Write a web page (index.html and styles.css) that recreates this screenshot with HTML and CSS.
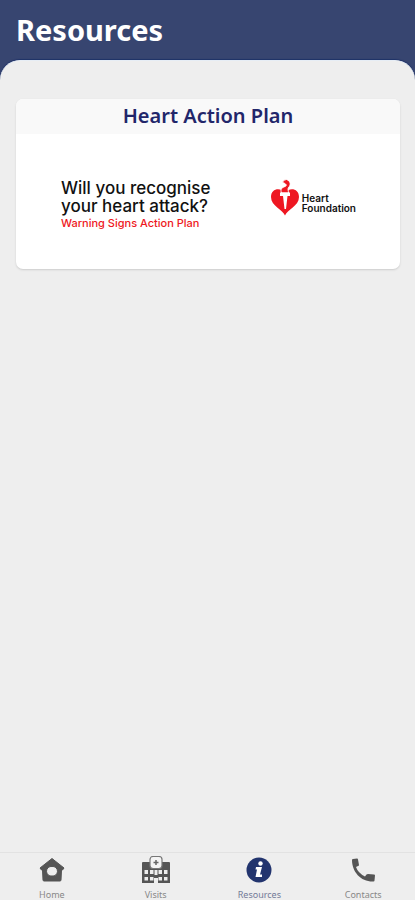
FILE: index.html
```html
<!DOCTYPE html>
<html lang="en">
<head>
<meta charset="utf-8">
<meta name="viewport" content="width=device-width, initial-scale=1">
<title>Resources</title>
<link rel="stylesheet" href="styles.css">
</head>
<body>
<header class="header"><h1 class="header-title">Resources</h1></header>
<main class="content">
  <a class="card" href="#plan">
    <h2 class="card-title">Heart Action Plan</h2>
    <div class="banner">
      <div class="message">
        <p class="question">Will you recognise<br>your heart attack?</p>
        <p class="subtitle">Warning Signs Action Plan</p>
      </div>
      <div class="brand">
        <svg class="brand-mark" viewBox="0 0 28 37" aria-hidden="true">
          <path fill="#ee1722" d="M14 36.500C12 31 0 27 0 18C0 9 10 8 14 14C18 8 28 9 28 18C28 27 16 31 14 36.500Z"/>
          <path fill="#ee1722" stroke="#fff" stroke-width="1" d="M10.500 14C9 10 11 8.500 14 7.500C16.500 6.500 15 4.500 11.500 3.500Q12 0.500 15.500 0.500C20 2 20 6 17.500 8.500C16.500 10 17.500 12 17.500 14Z"/>
          <path fill="#fff" d="M9 13.500H19V17H16.500L15 30H13.500L12 17H9Z"/>
        </svg>
        <p class="brand-name">Heart<br>Foundation</p>
      </div>
    </div>
  </a>
</main>
<nav class="tabs" aria-label="Main">
  <a class="tab" href="#home">
    <svg class="tab-icon" viewBox="0 0 30 28" aria-hidden="true">
      <path fill="#555" stroke="#555" stroke-width="1" stroke-linejoin="round" fill-rule="evenodd" d="M15 2.500L27 12L25.500 14H24.500L24 24Q24 25 23 25H7Q6 25 6 24L5.500 14H4.500L3 12ZM15 10.500A4.800 4.800 0 1 0 15 20A4.800 4.800 0 1 0 15 10.500Z"/>
    </svg>
    <span>Home</span>
  </a>
  <a class="tab" href="#visits">
    <svg class="tab-icon" viewBox="0 0 30 28" aria-hidden="true">
      <path fill="#555" fill-rule="evenodd" d="M1 7Q1 6 2 6H10V10H20V6H28Q29 6 29 7V27H17V22H13V27H1ZM3.500 14V18H7V14ZM9 14V18H12.500V14ZM17.500 14V18H21V14ZM23 14V18H26.500V14ZM3.500 21V24.500H7V21ZM9 21V24.500H12.500V21ZM17.500 21V24.500H21V21ZM23 21V24.500H26.500V21ZM13.500 14V19H16.500V14Z"/>
      <rect x="9" y="0.500" width="12" height="12" rx="3" fill="#f4f4f4" stroke="#777" stroke-width="1.200"/>
      <path stroke="#666" stroke-width="1.500" d="M15 4V9M12.500 6.500H17.500"/>
    </svg>
    <span>Visits</span>
  </a>
  <a class="tab tab-active" href="#resources" aria-current="page">
    <svg class="tab-icon" viewBox="0 0 30 28" aria-hidden="true">
      <circle cx="15" cy="14" r="12.500" fill="#22346e"/>
      <circle cx="16.500" cy="7.500" r="2.200" fill="#fff"/>
      <path fill="#fff" d="M12 11H18L16 18.500H18V21H11.500L13 13.500H11.500Z"/>
    </svg>
    <span>Resources</span>
  </a>
  <a class="tab" href="#contacts">
    <svg class="tab-icon" viewBox="0 0 30 28" aria-hidden="true">
      <path fill="#555" d="M5 3L9 2.500Q10 2.500 10 3.500L11 9Q11 10 10 10L8 11Q10 17 17 20.500L18.500 18.500Q19 18 20 18L26 18.500Q27 18.500 27 19.500L26.500 24.500Q26.500 25.500 25.500 25.500C13 26 4 16 4 4Q4 3 5 3Z"/>
    </svg>
    <span>Contacts</span>
  </a>
</nav>
</body>
</html>
```
FILE: styles.css
```css
* { box-sizing: border-box; }
body {
  margin: 0;
  min-height: 100vh;
  display: flex;
  flex-direction: column;
  background: #374570;
  font-family: "Noto Sans", "Open Sans", sans-serif;
}
h1, h2, p { margin: 0; }
a { color: inherit; text-decoration: none; }
.header { padding: 10px 16px; }
.header-title {
  color: #fff;
  font-size: 29px;
  line-height: 40px;
  font-weight: 700;
}
.content {
  flex: 1;
  padding: 38px 15px 16px 16px;
  background: #eee;
  border-top: 1px solid #e6edf5;
  border-radius: 20px 20px 0 0;
  box-shadow: 0 -1px 1px #1f3268;
}
.card {
  display: block;
  overflow: hidden;
  border-radius: 7px;
  background: #fff;
  box-shadow: 0 1px 2px #ccc;
}
.card-title {
  background: #f9f9f9;
  color: #22266a;
  font-size: 20px;
  line-height: 34px;
  padding-bottom: 1px;
  font-weight: 600;
  text-align: center;
}
.banner {
  display: flex;
  justify-content: space-between;
  align-items: flex-start;
  padding: 45px 44px 38px 45px;
}
.message, .brand { font-family: Inter, sans-serif; white-space: nowrap; }
.question {
  color: #111;
  font-size: 17px;
  line-height: 18px;
  font-weight: 500;
}
.subtitle {
  color: #ee1722;
  font-size: 11px;
  line-height: 16px;
  font-weight: 500;
}
.brand { display: flex; align-items: flex-end; gap: 3px; }
.brand-mark { width: 28px; height: 37px; }
.brand-name {
  color: #111;
  font-size: 10px;
  line-height: 10px;
  font-weight: 600;
  padding-bottom: 3px;
}
.tabs {
  display: grid;
  grid-template-columns: repeat(4, 1fr);
  height: 48px;
  background: #eee;
  border-top: 1px solid #e2e2e2;
}
.tab {
  display: flex;
  flex-direction: column;
  align-items: center;
  gap: 4px;
  padding-top: 3px;
  color: #888;
  font-size: 9px;
  line-height: 13px;
}
.tab-active { color: #737b98; }
.tab-icon { width: 30px; height: 28px; }
```
